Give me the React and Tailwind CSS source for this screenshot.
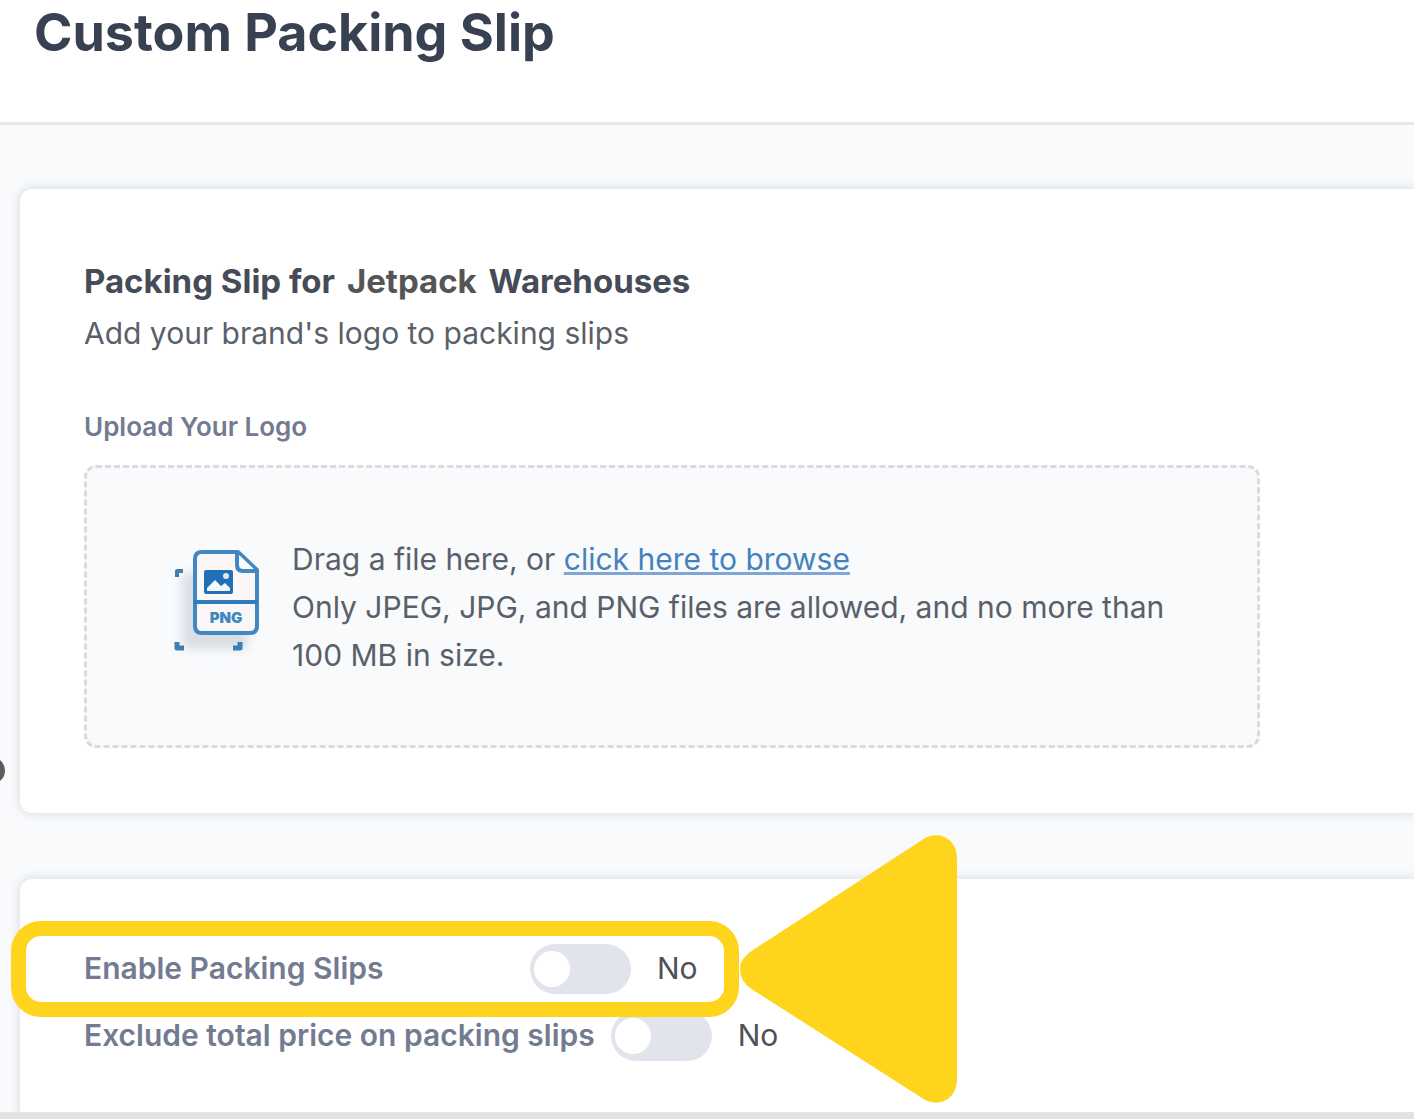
import React, { useState } from "react";

function FileIcon() {
  return (
    <svg viewBox="0 0 96 120" className="h-[120px] w-24 shrink-0" aria-hidden="true">
      <defs>
        <filter id="fileShadow" x="-40%" y="-40%" width="180%" height="180%">
          <feGaussianBlur stdDeviation="5" />
        </filter>
      </defs>
      <rect x="10" y="26" width="66" height="76" rx="6" fill="#cfd6de" opacity="0.75" filter="url(#fileShadow)" />
      <path
        d="M30 5H66L85 23V79Q85 86 78 86H30Q23 86 23 79V12Q23 5 30 5Z"
        fill="#fbf7f6"
        stroke="#4188c2"
        strokeWidth="4"
        strokeLinejoin="round"
      />
      <path d="M65 6V18Q65 24 71 24H84" fill="#f8fafc" stroke="#4188c2" strokeWidth="4" strokeLinejoin="round" />
      <path d="M22 55H85" stroke="#2f7dbd" strokeWidth="4" />
      <rect x="32" y="23" width="29" height="24" rx="2" fill="#1f70b8" />
      <path d="M35 44V41L43 33L49 39L53 36L58 41V44Z" fill="#f4f8fc" />
      <circle cx="54" cy="29" r="3" fill="#dce9f5" />
      <text x="54" y="76" textAnchor="middle" fontFamily="Inter, sans-serif" fontWeight="900" fontSize="15" fill="#4188c2">
        PNG
      </text>
      <path d="M5 30V24H11" fill="none" stroke="#3f7fb0" strokeWidth="4" strokeLinejoin="round" />
      <path d="M5 95V101H12" fill="none" stroke="#3f7fb0" strokeWidth="5" strokeLinejoin="round" />
      <path d="M68 95V101H61" fill="none" stroke="#3f7fb0" strokeWidth="5" strokeLinejoin="round" />
    </svg>
  );
}

function Toggle({ id, checked, onChange }) {
  return (
    <>
      <input
        id={id}
        type="checkbox"
        role="switch"
        checked={checked}
        onChange={(e) => onChange(e.target.checked)}
        className="h-[50px] w-[101px] shrink-0 cursor-pointer appearance-none rounded-full bg-[#e1e4eb] p-1 before:mt-[3px] before:block before:size-9 before:rounded-full before:bg-white before:transition-transform checked:bg-[#2f7dbd] checked:before:translate-x-14"
      />
      <span className="ml-[26px] text-[30px] text-[#4d5158]">{checked ? "Yes" : "No"}</span>
    </>
  );
}

export default function App() {
  const [enabled, setEnabled] = useState(false);
  const [exclude, setExclude] = useState(false);

  return (
    <div className="relative flex min-h-screen flex-col overflow-hidden bg-[#f8fafc] font-['Inter',sans-serif] text-[#5a6069]">
      <header className="border-b-3 border-[#e6e8ea] bg-white px-[34px] pb-14">
        <h1 className="text-[52px] leading-[66px] font-bold text-[#374151]">Custom Packing Slip</h1>
      </header>

      <span className="absolute top-[757px] -left-[22px] size-[27px] rounded-full bg-[#5c5c5c]" />

      <main className="flex grow flex-col gap-[66px] pt-16 pl-5">
        <section className="rounded-l-xl bg-white px-16 pt-[66px] pb-[65px] shadow-[0_0_8px_2px_#dfe2e5]">
          <h2 className="text-[33px] leading-[52px] font-bold text-[#454c57]">
            Packing Slip for <span className="mx-1 text-[#555555]">Jetpack</span> Warehouses
          </h2>
          <p className="text-[30px] leading-[52px]">Add your brand's logo to packing slips</p>

          <label htmlFor="logo" className="mt-[46px] block text-[26px] leading-[44px] font-semibold text-[#737b90]">
            Upload Your Logo
          </label>
          <div className="mt-4 flex min-h-[283px] max-w-[1176px] items-center rounded-xl border-3 border-dashed border-[#d9dbde] bg-[#f8fafc] pr-16 pl-[85px]">
            <FileIcon />
            <p className="ml-6 text-[30px] leading-[48px]">
              Drag a file here, or{" "}
              <a
                href="#logo"
                onClick={(e) => {
                  e.preventDefault();
                  document.getElementById("logo").click();
                }}
                className="text-[#4582bd] underline decoration-[#7fa6d8] decoration-3 underline-offset-2"
              >
                click here to browse
              </a>
              <br />
              Only JPEG, JPG, and PNG files are allowed, and no more than 100 MB in size.
            </p>
            <input id="logo" type="file" accept=".jpeg,.jpg,.png" className="sr-only" />
          </div>
        </section>

        <section className="grow rounded-tl-xl bg-white px-16 pt-14 pb-10 shadow-[0_0_8px_2px_#dfe2e5]">
          <div className="relative z-10 flex h-[67px] items-center">
            <label htmlFor="enable" className="w-[446px] text-[30px] font-semibold text-[#737b90]">
              Enable Packing Slips
            </label>
            <Toggle id="enable" checked={enabled} onChange={setEnabled} />
            <div className="pointer-events-none absolute top-1/2 -left-[73px] flex -translate-y-1/2 items-center">
              <div className="h-24 w-[728px] rounded-[30px] border-[15px] border-[#ffd41c]" />
              <svg viewBox="0 0 220 270" className="h-[270px] w-[220px]" aria-hidden="true">
                <path
                  d="M14 116L183 6C196 -4 218 2 218 25V245C218 268 196 274 183 264L14 156Q1 148 1 135Q1 124 14 116Z"
                  fill="#ffd41c"
                />
              </svg>
            </div>
          </div>
          <div className="flex h-[67px] items-center">
            <label htmlFor="exclude" className="mr-4 text-[30px] font-semibold text-[#737b90]">
              Exclude total price on packing slips
            </label>
            <Toggle id="exclude" checked={exclude} onChange={setExclude} />
          </div>
        </section>
      </main>
      <footer className="relative h-[7px] bg-[#e3e3e3]" />
    </div>
  );
}
